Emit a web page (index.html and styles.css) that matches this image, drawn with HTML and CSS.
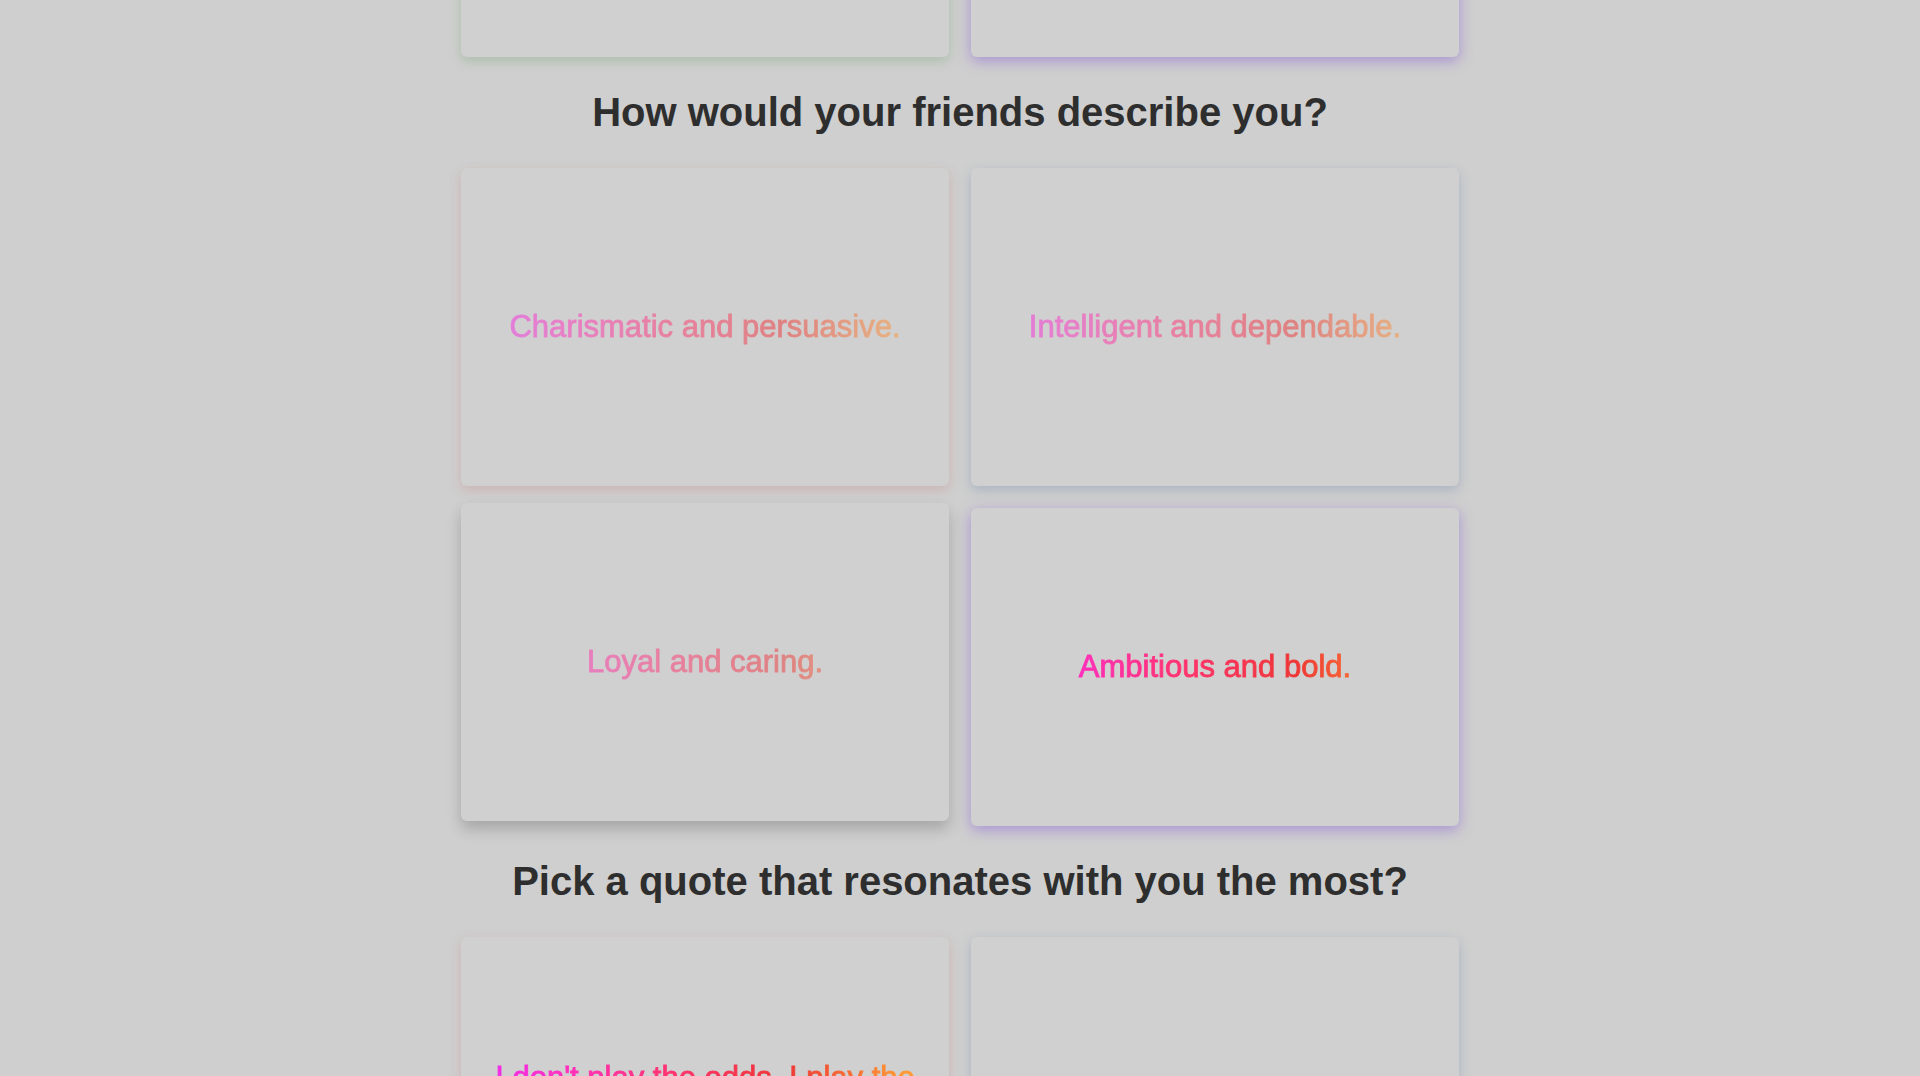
FILE: index.html
```html
<!DOCTYPE html>
<html lang="en">
<head>
<meta charset="utf-8">
<title>Which Suits character are you?</title>
<link rel="stylesheet" href="styles.css">
</head>
<body>
<main class="quiz">
  <section class="question">
    <h2 class="question-title">How do you handle a tough negotiation?</h2>
    <div class="options">
      <div class="option shadow-red is-dimmed"><p class="option-text">I go in with a plan.</p></div>
      <div class="option shadow-blue is-dimmed"><p class="option-text">I read the room first.</p></div>
      <div class="option shadow-green is-dimmed"><p class="option-text">I find common ground.</p></div>
      <div class="option shadow-purple is-selected"><p class="option-text">I never show my cards.</p></div>
    </div>
  </section>

  <section class="question">
    <h2 class="question-title">How would your friends describe you?</h2>
    <div class="options">
      <div class="option shadow-red is-dimmed"><p class="option-text">Charismatic and persuasive.</p></div>
      <div class="option shadow-blue is-dimmed"><p class="option-text">Intelligent and dependable.</p></div>
      <div class="option shadow-dark is-dimmed is-hovered"><p class="option-text">Loyal and caring.</p></div>
      <div class="option shadow-purple is-selected"><p class="option-text">Ambitious and bold.</p></div>
    </div>
  </section>

  <section class="question">
    <h2 class="question-title">Pick a quote that resonates with you the most?</h2>
    <div class="options">
      <div class="option shadow-red"><p class="option-text">I don't play the odds, I play the man.</p></div>
      <div class="option shadow-blue"><p class="option-text">Loyalty is a two-way street.</p></div>
    </div>
  </section>
</main>
</body>
</html>
```

FILE: styles.css
```css
html {
  scrollbar-width: none;
}

html::-webkit-scrollbar {
  display: none;
}

html,
body {
  margin: 0;
  background: #cfcfcf;
}

body {
  font-family: "Liberation Sans", Arial, Helvetica, sans-serif;
}

.quiz {
  width: 998px;
  margin: -712px auto 0;
  display: flex;
  flex-direction: column;
}

.question-title {
  margin: 33px 0;
  font-size: 40px;
  font-weight: 700;
  line-height: normal;
  color: #2e2e2e;
  text-align: center;
}

.options {
  display: grid;
  grid-template-columns: 1fr 1fr;
  gap: 22px;
}

.option {
  box-sizing: border-box;
  height: 318px;
  padding: 24px;
  border-radius: 6px;
  background: #d0d0d0;
  display: flex;
  align-items: center;
  justify-content: center;
}

.option-text {
  margin: 0;
  width: 100%;
  font-size: 31px;
  line-height: 1.2;
  text-align: center;
  background: linear-gradient(90deg, #f02af0 0%, #ff2fbf 18%, #ff3370 42%, #ee3535 68%, #ff9933 95%);
  -webkit-background-clip: text;
  background-clip: text;
  color: transparent;
  -webkit-text-stroke: 0.9px transparent;
}

.option.is-dimmed .option-text {
  opacity: 0.5;
}

.shadow-red {
  box-shadow: 0 4px 12px rgba(200, 120, 120, 0.3);
}

.shadow-blue {
  box-shadow: 0 4px 12px rgba(100, 130, 170, 0.35);
}

.shadow-green {
  box-shadow: 0 4px 12px rgba(110, 160, 110, 0.35);
}

.shadow-purple {
  box-shadow: 0 4px 14px rgba(130, 90, 215, 0.5);
}

.shadow-dark {
  box-shadow: 0 8px 15px rgba(0, 0, 0, 0.2);
}

.option.is-hovered {
  transform: translateY(-5px);
}
```
